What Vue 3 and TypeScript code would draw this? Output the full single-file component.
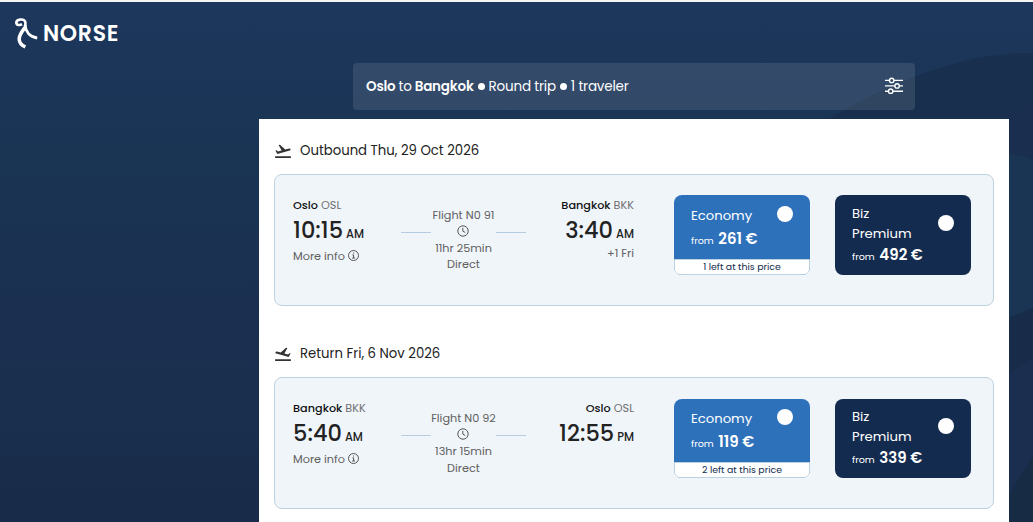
<template>
  <div class="page">
    <svg class="waves" width="1033" height="520" viewBox="0 2 1033 520">
      <path d="M790 150Q835 109 900 83Q970 52 1033 53V522H790Z" fill="#18304e" />
      <path d="M900 190Q970 120 1033 106V522H900Z" fill="#1b2d4f" opacity="0.5" />
      <path d="M1000 153Q1020 154 1033 160V308L1000 322Z" fill="#1a3553" />
      <path d="M1000 322L1033 308V358L1000 380Z" fill="#182c49" />
      <path d="M1000 380L1033 358V462L1000 510Z" fill="#1b2e4f" />
      <path d="M1000 510L1033 455V522H1000Z" fill="#172b45" />
    </svg>

    <header class="header">
      <svg class="mark" width="24" height="32" viewBox="0 0 24 32">
        <g fill="none" stroke="#fff" stroke-linecap="butt">
          <path d="M8 7.2C5.6 8.8 2.2 8 2.3 5.5C2.6 2.4 9.6 1 11.2 4.6C12 6.8 10.8 9.6 11 12" stroke-width="2.6" />
          <path d="M11 8C11.6 14.4 15.6 20 23.2 21" stroke-width="2.8" />
          <path d="M11 10.5C7.7 14.8 4.9 18.2 5.2 22.3C5.4 26 7.8 28.4 11.4 29.8" stroke-width="3.5" />
        </g>
      </svg>
      <span class="brand">NORSE</span>
    </header>

    <div class="search">
      <div class="summary">
        <b class="s-from">Oslo</b>
        <span class="s-to">to</span>
        <b class="s-dest">Bangkok</b>
        <i class="dot"></i>
        <span class="s-trip">Round trip</span>
        <i class="dot"></i>
        <span class="s-pax">1 traveler</span>
      </div>
      <svg class="filters" width="18" height="18" viewBox="0 0 18 18" fill="none" stroke="#fff" stroke-width="1.4">
        <path d="M0 3.4H4.4M9 3.4H18M0 8.9H9.8M14.4 8.9H18M0 14.2H3.4M8 14.2H18" />
        <circle cx="6.7" cy="3.4" r="2.2" />
        <circle cx="12.1" cy="8.9" r="2.2" />
        <circle cx="5.7" cy="14.2" r="2.2" />
      </svg>
    </div>

    <main class="results">
      <section v-for="leg in legs" :key="leg.id" class="leg" :class="leg.id">
        <h2 class="leg-title">
          <svg width="18" height="18" viewBox="0 0 24 24" fill="#333">
            <path :class="{ landing: leg.id === 'return' }" d="M1.5 19h21v2.2h-21zM22.07 9.64c-.21-.8-1.04-1.28-1.84-1.06L14.92 10l-6.9-6.43-1.93.51 4.14 7.17-4.97 1.33-1.97-1.54-1.45.39 2.59 4.49 16.57-4.44c.81-.22 1.28-1.04 1.07-1.84z" />
          </svg>
          <span>{{ leg.title }}</span>
        </h2>

        <div class="card">
          <div class="stop">
            <p class="place"><b>{{ leg.from.city }}</b> {{ leg.from.code }}</p>
            <p class="time"><span>{{ leg.from.time }}</span><small>{{ leg.from.half }}</small></p>
            <p class="note">
              More info
              <svg width="11" height="11" viewBox="0 0 11 11" fill="none" stroke="#555">
                <circle cx="5.5" cy="5.5" r="5" />
                <path d="M4.4 4.9H5.6V8M4.2 8H7M5 3H6.1" />
              </svg>
            </p>
          </div>

          <div class="route">
            <i class="line"></i>
            <div class="flight">
              <span>{{ leg.flight }}</span>
              <svg width="12" height="12" viewBox="0 0 12 12" fill="none" stroke="#555">
                <circle cx="6" cy="6" r="5.2" />
                <path d="M5.8 2.8V6.2L8.2 7.4" />
              </svg>
              <span>{{ leg.duration }}</span>
              <span>Direct</span>
            </div>
            <i class="line"></i>
          </div>

          <div class="stop arrival">
            <p class="place"><b>{{ leg.to.city }}</b> {{ leg.to.code }}</p>
            <p class="time"><span>{{ leg.to.time }}</span><small>{{ leg.to.half }}</small></p>
            <p class="note">{{ leg.to.note }}</p>
          </div>

          <div class="fare economy">
            <div class="fare-main">
              <div>
                <p class="fare-name">Economy</p>
                <p class="price">from <b>{{ leg.economy }} €</b></p>
              </div>
              <i class="radio"></i>
            </div>
            <div class="left">{{ leg.left }} left at this price</div>
          </div>

          <div class="fare premium">
            <div>
              <p class="fare-name">Biz<br />Premium</p>
              <p class="price">from <b>{{ leg.premium }} €</b></p>
            </div>
            <i class="radio"></i>
          </div>
        </div>
      </section>
    </main>
  </div>
</template>

<script setup lang="ts">
interface Stop {
  city: string;
  code: string;
  time: string;
  half: string;
  note?: string;
}

interface Leg {
  id: string;
  title: string;
  from: Stop;
  to: Stop;
  flight: string;
  duration: string;
  economy: number;
  left: number;
  premium: number;
}

const legs: Leg[] = [
  {
    id: "outbound",
    title: "Outbound Thu, 29 Oct 2026",
    from: { city: "Oslo", code: "OSL", time: "10:15", half: "AM" },
    to: { city: "Bangkok", code: "BKK", time: "3:40", half: "AM", note: "+1 Fri" },
    flight: "Flight N0 91",
    duration: "11hr 25min",
    economy: 261,
    left: 1,
    premium: 492,
  },
  {
    id: "return",
    title: "Return Fri, 6 Nov 2026",
    from: { city: "Bangkok", code: "BKK", time: "5:40", half: "AM" },
    to: { city: "Oslo", code: "OSL", time: "12:55", half: "PM" },
    flight: "Flight N0 92",
    duration: "13hr 15min",
    economy: 119,
    left: 2,
    premium: 339,
  },
];
</script>

<style>
body {
  margin: 0;
  overflow: hidden;
}
</style>

<style scoped>
.page {
  position: relative;
  box-sizing: border-box;
  width: 1033px;
  height: 522px;
  overflow: hidden;
  border-top: 2px solid #f4f4f4;
  background: linear-gradient(#1d375d, #1a3454 30%, #1b2f50 65%, #182c49);
  font-family: Poppins, Inter, sans-serif;
  color: #222;
}
.page p,
.page h2 {
  margin: 0;
}
/* decorative background shapes */
.waves {
  position: absolute;
  top: 0;
  left: 0;
}
.header {
  position: relative;
  display: flex;
  height: 61px;
  padding-left: 14px;
}
.mark {
  margin-top: 15px;
}
.brand {
  margin: 19px 0 0 5px;
  color: #fff;
  font-size: 22px;
  font-weight: 600;
  line-height: 25px;
  letter-spacing: 0.7px;
}
.search {
  position: relative;
  box-sizing: border-box;
  display: flex;
  align-items: center;
  justify-content: space-between;
  width: 562px;
  height: 47px;
  margin-left: 353px;
  padding: 0 12px 0 13px;
  border-radius: 4px;
  background: rgba(255, 255, 255, 0.1);
}
.summary {
  display: flex;
  align-items: center;
  color: #fff;
  font-size: 13.5px;
  letter-spacing: -0.2px;
}
.summary b {
  font-weight: 600;
}
.s-to {
  margin: 0 3px;
}
.dot {
  width: 7px;
  height: 7px;
  margin: -1px 4px 0;
  border-radius: 50%;
  background: #fff;
}
.filters {
  margin-top: -2px;
}
.results {
  position: relative;
  box-sizing: border-box;
  width: 750px;
  height: 420px;
  margin: 9px 0 0 259px;
  padding: 21px 15px 0;
  background: #fff;
}
.leg {
  height: 203px;
}
.leg-title {
  display: flex;
  align-items: center;
  gap: 8px;
  height: 20px;
  padding-top: 1px;
  color: #222;
  font-size: 13.25px;
  font-weight: 400;
}
.landing {
  transform: translateX(24px) scaleX(-1);
}
.card {
  box-sizing: border-box;
  display: flex;
  align-items: flex-start;
  width: 720px;
  height: 132px;
  margin-top: 13px;
  padding: 20px 22px 0 18px;
  border: 1px solid #bdd2e0;
  border-radius: 8px;
  background: #f0f5fa;
}
.stop {
  width: 108px;
  white-space: nowrap;
}
.place {
  height: 20px;
  color: #707070;
  font-size: 11.25px;
  line-height: 20px;
}
.place b {
  color: #111;
  font-weight: 500;
}
.time {
  display: flex;
  align-items: baseline;
  gap: 3px;
  height: 31px;
  font-size: 22.5px;
  font-weight: 500;
  line-height: 31px;
}
.time small {
  font-size: 11.4px;
}
.note {
  color: #606060;
  font-size: 11.25px;
  line-height: 20px;
}
.note svg {
  vertical-align: -1px;
}
.route {
  display: flex;
  width: 125px;
  margin-top: 12px;
}
.line {
  width: 30px;
  height: 1px;
  margin-top: 25px;
  background: #b4cbe2;
}
.flight {
  display: flex;
  flex: 1;
  flex-direction: column;
  align-items: center;
  color: #606060;
  font-size: 11.25px;
  line-height: 16.5px;
  white-space: nowrap;
}
.flight span {
  margin: 0 -10px;
}
.flight svg {
  margin: 1px 1px 3px 0;
}
.return .flight span:last-child {
  margin-top: 1px;
}
.arrival {
  text-align: right;
}
.arrival .time {
  justify-content: flex-end;
}
.arrival .note {
  margin-top: -3px;
}
.fare {
  box-sizing: border-box;
  width: 136px;
  height: 80px;
  border-radius: 8px;
  color: #fff;
}
.return .fare {
  height: 79px;
  margin-top: 1px;
}
.economy {
  display: flex;
  flex-direction: column;
  margin-left: 40px;
  overflow: hidden;
  background: #2e71bb;
}
.fare-main {
  display: flex;
  flex: 1;
  justify-content: space-between;
  padding: 11px 17px 0;
}
.return .fare-main {
  padding-top: 10px;
}
.premium {
  display: flex;
  justify-content: space-between;
  margin-left: 25px;
  padding: 9px 17px 0;
  background: #132b4e;
}
.return .premium {
  padding-top: 8px;
}
.fare-name {
  font-size: 13.2px;
  line-height: 20px;
}
.price {
  font-size: 9.6px;
  line-height: 25px;
  white-space: nowrap;
}
.premium .price {
  line-height: 22px;
}
.price b {
  margin-left: 2px;
  font-size: 15px;
  font-weight: 600;
}
.radio {
  width: 16px;
  height: 16px;
  border-radius: 50%;
  background: #fff;
}
.premium .radio {
  margin-top: 11px;
}
.left {
  box-sizing: border-box;
  height: 16px;
  border: 1px solid #bdd2e0;
  border-radius: 0 0 5px 5px;
  background: #fff;
  color: #132b4e;
  font-size: 9.4px;
  line-height: 14px;
  text-align: center;
}
</style>
